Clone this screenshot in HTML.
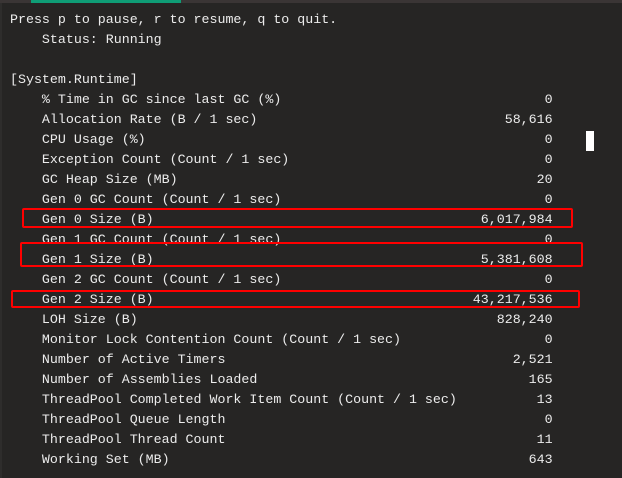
<!DOCTYPE html>
<html><head><meta charset="utf-8"><style>
html,body{margin:0;padding:0;width:622px;height:478px;overflow:hidden;background:#262524;}
.top{position:absolute;left:0;top:0;width:622px;height:3px;background:#3a3535;}
.grn{position:absolute;left:31px;top:0;width:150px;height:3px;background:#0f9d76;}
.lb{position:absolute;left:0;top:3px;width:2px;height:475px;background:#2e2d2c;}
pre{position:absolute;left:10px;top:10px;margin:0;font-family:"Liberation Mono",monospace;font-size:13.3px;line-height:20px;color:#ececec;}
.box{position:absolute;border:2px solid #ff0000;border-radius:2px;box-sizing:border-box;}
.cur{position:absolute;left:586px;top:131px;width:8px;height:20px;background:#fff;}
</style></head><body>
<div class="top"></div><div class="grn"></div><div class="lb"></div>
<pre>Press p to pause, r to resume, q to quit.
    Status: Running

[System.Runtime]
    % Time in GC since last GC (%)                                 0
    Allocation Rate (B / 1 sec)                               58,616
    CPU Usage (%)                                                  0
    Exception Count (Count / 1 sec)                                0
    GC Heap Size (MB)                                             20
    Gen 0 GC Count (Count / 1 sec)                                 0
    Gen 0 Size (B)                                         6,017,984
    Gen 1 GC Count (Count / 1 sec)                                 0
    Gen 1 Size (B)                                         5,381,608
    Gen 2 GC Count (Count / 1 sec)                                 0
    Gen 2 Size (B)                                        43,217,536
    LOH Size (B)                                             828,240
    Monitor Lock Contention Count (Count / 1 sec)                  0
    Number of Active Timers                                    2,521
    Number of Assemblies Loaded                                  165
    ThreadPool Completed Work Item Count (Count / 1 sec)          13
    ThreadPool Queue Length                                        0
    ThreadPool Thread Count                                       11
    Working Set (MB)                                             643</pre>
<div class="box" style="left:22px;top:208px;width:551px;height:20px;"></div>
<div class="box" style="left:20px;top:242px;width:563px;height:25px;"></div>
<div class="box" style="left:11px;top:290px;width:569px;height:18px;"></div>
<div class="cur"></div>
</body></html>
